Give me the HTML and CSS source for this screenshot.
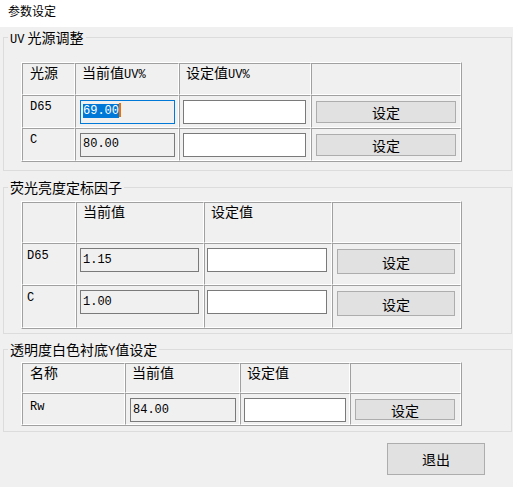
FILE: index.html
```html
<!DOCTYPE html>
<html lang="zh-CN">

<head>
  <meta charset="UTF-8">
  <meta name="viewport" content="width=device-width, initial-scale=1.0">
  <title>参数设定</title>
  <link rel="stylesheet" href="styles.css">
</head>

<body>
  <!-- Dialog caption -->
  <div class="titlebar">参数设定</div>

  <!-- Group: UV light source -->
  <fieldset class="group group-uv">
    <legend><span class="latin">UV</span> 光源调整</legend>
    <div class="grid grid-uv">
      <div class="cell head head-first">光源</div>
      <div class="cell head">当前值<span class="latin">UV%</span></div>
      <div class="cell head">设定值<span class="latin">UV%</span></div>
      <div class="cell head"></div>

      <div class="cell name">D65</div>
      <div class="cell"><div class="edit focus"><span class="sel">69.00</span><span class="caret"></span></div></div>
      <div class="cell"><input class="entry" type="text"></div>
      <div class="cell"><button class="btn">设定</button></div>

      <div class="cell name">C</div>
      <div class="cell"><div class="edit">80.00</div></div>
      <div class="cell"><input class="entry" type="text"></div>
      <div class="cell"><button class="btn">设定</button></div>
    </div>
  </fieldset>

  <!-- Group: fluorescence brightness factor -->
  <fieldset class="group group-fl">
    <legend>荧光亮度定标因子</legend>
    <div class="grid grid-fl">
      <div class="cell head"></div>
      <div class="cell head">当前值</div>
      <div class="cell head">设定值</div>
      <div class="cell head"></div>

      <div class="cell name">D65</div>
      <div class="cell"><div class="edit">1.15</div></div>
      <div class="cell"><input class="entry" type="text"></div>
      <div class="cell"><button class="btn">设定</button></div>

      <div class="cell name">C</div>
      <div class="cell"><div class="edit">1.00</div></div>
      <div class="cell"><input class="entry" type="text"></div>
      <div class="cell"><button class="btn">设定</button></div>
    </div>
  </fieldset>

  <!-- Group: white backing Y value -->
  <fieldset class="group group-rw">
    <legend>透明度白色衬底<span class="latin">Y</span>值设定</legend>
    <div class="grid grid-rw">
      <div class="cell head head-first">名称</div>
      <div class="cell head">当前值</div>
      <div class="cell head">设定值</div>
      <div class="cell head"></div>

      <div class="cell name">Rw</div>
      <div class="cell"><div class="edit">84.00</div></div>
      <div class="cell"><input class="entry" type="text"></div>
      <div class="cell"><button class="btn">设定</button></div>
    </div>
  </fieldset>

  <!-- Footer -->
  <div class="footer">
    <button class="btn btn-exit">退出</button>
  </div>
</body>

</html>
```

FILE: styles.css
```css
/* Base */
* {
  box-sizing: border-box;
}

body {
  margin: 0;
  width: 513px;
  height: 487px;
  overflow: hidden;
  background: #f0f0f0;
  color: #000;
  font-family: "Noto Sans CJK SC", sans-serif;
  font-size: 14px;
  line-height: 16px;
}

.latin {
  font-family: "Liberation Mono", monospace;
  font-size: 12px;
  line-height: 12px;
}

/* Caption */
.titlebar {
  height: 27px;
  padding: 3px 0 0 8px;
  background: #fff;
  font-size: 12px;
  line-height: 16px;
}

/* Group boxes */
.group {
  margin: 2px 1px 0 3px;
  padding: 0 0 8px 0;
  border: 1px solid #dcdcdc;
  min-inline-size: 0;
}

.group legend {
  height: 16px;
  margin-left: 4px;
  padding: 0 2px;
  font-size: 14px;
  line-height: 16px;
}

.group-fl {
  margin-top: 8px;
  padding-bottom: 4px;
}

.group-rw {
  margin-top: 7px;
  padding-bottom: 5px;
}

/* Grids */
.grid {
  display: grid;
  width: max-content;
  margin-left: 17px;
  border: 1px solid;
  border-color: #fff #a0a0a0 #a0a0a0 #fff;
}

.cell {
  border: 1px solid;
  border-color: #a0a0a0 #fff #fff #a0a0a0;
}

.head {
  padding-left: 6px;
}

.head-first {
  padding-left: 7px;
}

.name {
  padding: 3px 0 0 7px;
  font-family: "Liberation Mono", monospace;
  font-size: 12px;
}

.grid-uv {
  margin-top: 17px;
  grid-template-columns: 53px 104px 132px 150px;
  grid-template-rows: 32px 33px 33px;
}

.grid-fl {
  margin-top: 6px;
  grid-template-columns: 54px 128px 128px 129px;
  grid-template-rows: 41px 42px 43px;
}

.grid-fl .name {
  padding: 4px 0 0 4px;
}

.grid-rw {
  margin-top: 5px;
  grid-template-columns: 103px 115px 110px 111px;
  grid-template-rows: 30px 32px;
}

.grid-rw .name {
  padding-top: 5px;
}

/* Controls */
.edit {
  height: 24px;
  padding: 2px 0 0 2px;
  border: 1px solid #7a7a7a;
  background: #f0f0f0;
  font-family: "Liberation Mono", monospace;
  font-size: 12px;
  line-height: 16px;
  white-space: nowrap;
}

.edit.focus {
  border-color: #0078d7;
}

.sel {
  background: #0078d7;
  color: #fff;
}

.caret {
  display: inline-block;
  width: 2px;
  height: 14px;
  vertical-align: -3px;
  background: #e8700a;
}

.entry {
  display: block;
  height: 24px;
  margin: 0;
  padding: 0;
  border: 1px solid #7a7a7a;
  background: #fff;
  outline: none;
}

.btn {
  display: block;
  margin: 0;
  padding: 0;
  border: 1px solid #adadad;
  background: #e1e1e1;
  color: #000;
  font-family: "Noto Sans CJK SC", sans-serif;
  font-size: 14px;
  line-height: 16px;
}

/* Control sizes per grid */
.grid-uv .edit { width: 95px; margin: 4px 0 0 4px; }
.grid-uv .entry { width: 123px; margin: 4px 0 0 3px; }
.grid-uv .btn { width: 140px; height: 22px; margin: 5px 0 0 4px; }

.grid-fl .edit { width: 119px; margin: 4px 0 0 3px; padding-top: 3px; }
.grid-fl .entry { width: 120px; margin: 4px 0 0 2px; }
.grid-fl .btn { width: 118px; height: 25px; margin: 5px 0 0 4px; }

.grid-rw .edit { width: 106px; margin: 4px 0 0 4px; padding-top: 3px; }
.grid-rw .entry { width: 102px; margin: 4px 0 0 3px; }
.grid-rw .btn { width: 100px; height: 21px; margin: 5px 0 0 4px; }

/* Footer */
.footer {
  display: flex;
  justify-content: flex-end;
  padding: 11px 28px 0 0;
}

.btn-exit {
  width: 98px;
  height: 32px;
}
```
